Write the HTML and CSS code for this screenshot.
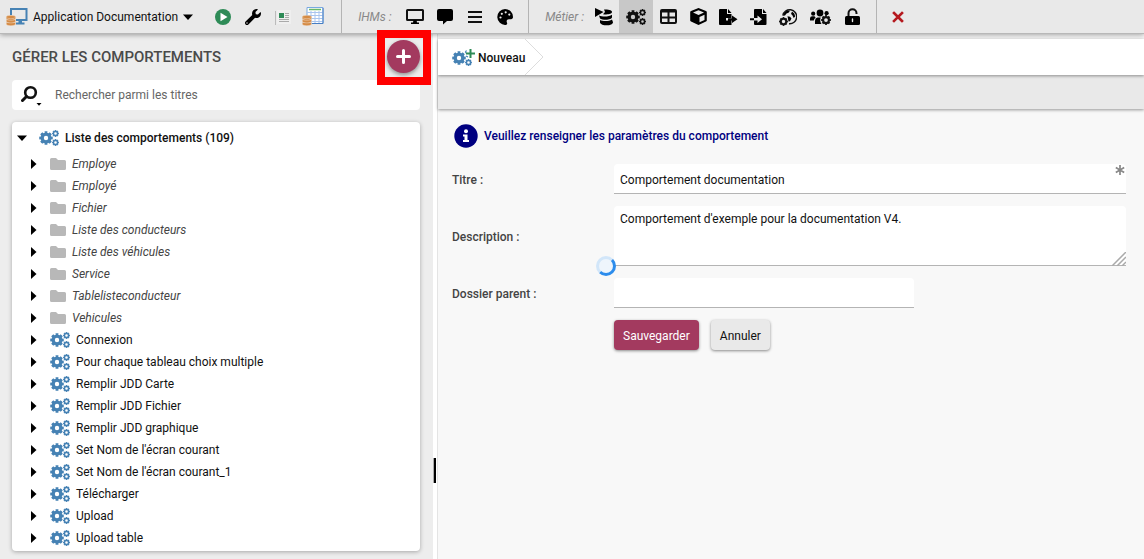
FILE: index.html
```
<!DOCTYPE html>
<html lang="fr">
<head>
<meta charset="utf-8">
<title>Gérer les comportements</title>
<link rel="stylesheet" href="styles.css">
</head>
<body>
<svg class="sprite" aria-hidden="true">
  <symbol id="gear-big" viewBox="0 0 14 14">
    <circle cx="7" cy="7" r="3.900" fill="none" stroke="currentColor" stroke-width="3.400"/>
    <circle cx="7" cy="7" r="5.700" fill="none" stroke="currentColor" stroke-width="2.200" pathLength="16" stroke-dasharray="1.200 .8" stroke-dashoffset=".6"/>
  </symbol>
  <symbol id="gear-small" viewBox="0 0 8 8">
    <circle cx="4" cy="4" r="2.400" fill="none" stroke="currentColor" stroke-width="1.800"/>
    <circle cx="4" cy="4" r="3.300" fill="none" stroke="currentColor" stroke-width="1.300" pathLength="16" stroke-dasharray="1.200 .8" stroke-dashoffset=".6"/>
  </symbol>
  <symbol id="gears" viewBox="0 0 20 16">
    <use href="#gear-big" x="0" y="1" width="14" height="14"/>
    <use href="#gear-small" x="13" y="0" width="7" height="7"/>
    <use href="#gear-small" x="13" y="9" width="7" height="7"/>
  </symbol>
  <symbol id="folder" viewBox="0 0 16 12">
    <path d="M1.500 0H6l2 2h6.500Q16 2 16 3.500V10.500Q16 12 14.500 12H1.500Q0 12 0 10.500V1.500Q0 0 1.500 0z" fill="#b8b8b8"/>
  </symbol>
  <symbol id="coins" viewBox="0 0 10 11">
    <g fill="#d58b45" stroke="#efd9c4" stroke-width=".5">
      <path d="M.3 7.500v1.500c0 2.300 9.200 2.300 9.200 0V7.500z"/>
      <path d="M.3 4.700v1.500c0 2.300 9.200 2.300 9.200 0V4.700z"/>
      <path d="M.3 2v1.500c0 2.300 9.200 2.300 9.200 0V2z"/>
      <ellipse cx="4.900" cy="2" rx="4.600" ry="1.700"/>
    </g>
  </symbol>
</svg>

<header class="toolbar">
  <div class="group group-app">
    <button class="app-menu" type="button">
      <svg width="22" height="20" viewBox="0 0 22 20"><path d="M5 8V2h15.500v11H10" fill="none" stroke="#4682b4" stroke-width="2"/><path d="M12.500 13h3.500v2.500h2.500V17.500H10v-2h2.500z" fill="#4682b4"/><use href="#coins" x="0" y="8" width="10" height="11"/></svg>
      <span>Application Documentation</span>
      <svg width="10" height="6" viewBox="0 0 10 6"><path d="M0 .5h10L5 6z"/></svg>
    </button>
    <div class="tools">
      <button class="tool" type="button" aria-label="Exécuter"><svg width="16" height="16" viewBox="0 0 16 16"><circle cx="8" cy="8" r="8" fill="#2e8b57"/><path d="M5.500 3.700v8.600L12.500 8z" fill="#fff"/></svg></button>
      <button class="tool" type="button" aria-label="Outils"><svg width="16" height="16" viewBox="0 0 512 512"><path d="M507.700 109.100c-2.200-9-13.500-12.100-20.100-5.500l-74.400 74.400-67.900-11.300L334 98.900l74.400-74.400c6.600-6.600 3.400-17.900-5.700-20.200-47.400-11.700-99.600.9-136.600 37.900-39.600 39.600-50.500 97.100-34.100 147.200L18.700 402.800c-25 25-25 65.500 0 90.500s65.500 25 90.500 0l213.200-213.200c50.100 16.700 107.500 5.700 147.400-34.200 37.100-37.100 49.700-89.300 37.900-136.800zM64 472c-13.200 0-24-10.800-24-24s10.700-24 24-24 24 10.700 24 24-10.700 24-24 24z"/></svg></button>
      <button class="tool" type="button" aria-label="Journal"><svg width="16" height="16" viewBox="0 0 16 16"><path d="M2 1h14v14H2z" fill="#efefef"/><path d="M.5 2v14" stroke="#bbb"/><path d="M4 4h5v5H4z" fill="#2e8b57"/><path d="M10 4.500h4M10 6.500h4M10 8.500h4M4 10.500h10M4 12.500h10" stroke="#aaa"/></svg></button>
      <button class="tool" type="button" aria-label="Données"><svg width="22" height="19" viewBox="0 0 22 19"><path d="M5 .5h16v16H5z" fill="#fff" stroke="#79a9e0"/><path d="M7 2.500h12" stroke="#68b868" stroke-width="1.500"/><path d="M5 5.500h16M5 8.500h16M5 11.500h16M5 14.500h16M9 4v12M13 4v12M17 4v12" stroke="#a9c5ee"/><path d="M21 1v15.500H10" fill="none" stroke="#477fc4"/><use href="#coins" x="0" y="8" width="10" height="11"/></svg></button>
    </div>
  </div>
  <div class="group group-ihm">
    <span class="group-label">IHMs :</span>
    <button class="tool" type="button" aria-label="Écrans"><svg width="20" height="17" viewBox="0 0 20 17"><rect x="2" y="2" width="16" height="10" rx=".5" fill="none" stroke="#111" stroke-width="2"/><path d="M8.500 12h3l.5 2.500h2V16H6v-1.500h2z"/></svg></button>
    <button class="tool" type="button" aria-label="Messages"><svg width="16" height="17" viewBox="0 0 16 17"><path d="M2 1h12q2 0 2 2v8q0 2-2 2H10l-4 3.500V13H2q-2 0-2-2V3q0-2 2-2z"/></svg></button>
    <button class="tool" type="button" aria-label="Menus"><svg width="14" height="14" viewBox="0 0 14 14"><path d="M0 2h14M0 7h14M0 12h14" stroke="#111" stroke-width="2"/></svg></button>
    <button class="tool" type="button" aria-label="Thèmes"><svg width="16" height="16" viewBox="0 0 16 16"><path d="M8 0a8 8 0 1 0 .6 16c1.600-.2 1.900-1.500 1.300-2.600-.8-1.600.3-3.200 2-3.200H14c1.200 0 2-.9 2-2.200A8 8 0 0 0 8 0z"/><g fill="#e9e9e9"><circle cx="3.500" cy="8.500" r="1.100"/><circle cx="4.800" cy="4.800" r="1.100"/><circle cx="8.700" cy="3.300" r="1.100"/><circle cx="12.300" cy="5.600" r="1.100"/></g></svg></button>
  </div>
  <div class="group group-business">
    <span class="group-label">Métier :</span>
    <button class="tool" type="button" aria-label="Actions de données"><svg width="18" height="18" viewBox="0 0 18 18"><path d="M0 0l8.500 4L0 9z"/><path d="M9 1.500c4 0 8 .4 8 2.500S12.500 6.800 8 6.200L10 4zM4 7.500c3 1.500 10 1.600 13-.7v2.500c0 3-9.500 3-12 1.200zM5 12c3 1.400 9 1.400 12-.6l1 2.800c0 4-12 4-13 .5z"/></svg></button>
    <button class="tool tool-active" type="button" aria-label="Comportements"><svg width="20" height="16"><use href="#gears"/></svg></button>
    <button class="tool" type="button" aria-label="Tableaux"><svg width="17" height="15" viewBox="0 0 17 15"><rect x="1" y="1" width="15" height="13" rx="1" fill="none" stroke="#111" stroke-width="2"/><path d="M1 2.500h15M1 8.500h15M8.500 3v11" stroke="#111" stroke-width="2"/></svg></button>
    <button class="tool" type="button" aria-label="Modules"><svg width="17" height="17" viewBox="0 0 17 17"><path d="M8.500 0l7.500 3q.8.300.8 1v8.500q0 .7-.8 1L8.500 17 1 13.500q-.8-.3-.8-1V4q0-.7.8-1z"/><path d="M8.500 2.200L3 4.500 8.500 7 14 4.500zM9.500 9l5-2.300v5.200L9.500 14.300z" fill="#e9e9e9"/></svg></button>
    <button class="tool" type="button" aria-label="Exporter"><svg width="19" height="16" viewBox="0 0 19 16"><path d="M1 0h7v5h4.500v4H7v2.500h5.500V16H1q-1 0-1-1V1q0-1 1-1zM9 0l3.500 4H9zM13 9.200V6.500L18.500 10.300 13 14v-2.500H9V9.200z"/></svg></button>
    <button class="tool" type="button" aria-label="Importer"><svg width="17" height="16" viewBox="0 0 17 16"><path d="M5 0h7v5h4.500v10q0 1-1 1H5q-1 0-1-1v-3.500h3.500V14L12 10.200 7.500 6.500V9H4V1q0-1 1-1zM13 0l3.500 4H13zM0 9.300h4v1.900H0z"/></svg></button>
    <button class="tool" type="button" aria-label="Services web"><svg width="18" height="18" viewBox="0 0 18 18"><path d="M3.800 7.500a7 7 0 1 1 6.200 8.200" fill="none" stroke="#111" stroke-width="1.400"/><path d="M5.500 4.500L8 2.500l3 .2-1.500 2L7.500 5.500 6 7.500l-2 .3zM13 3.500l2.300 2 .9 3-1.500 1.500-1.500-3-1.200-1zM8.500 8.200l2.500.6 1.500 1.700-1.500 2.700-1.500.3-.5-2.500z"/><use href="#gear-small" x="0" y="9" width="9" height="9"/></svg></button>
    <button class="tool tool-wide" type="button" aria-label="Utilisateurs"><svg width="21" height="16" viewBox="0 0 21 16"><circle cx="3.200" cy="4.700" r="2.100"/><circle cx="10" cy="4" r="3.400"/><circle cx="16.600" cy="4.200" r="2.100"/><path d="M0 11.500V9.500q0-2.200 2.200-2.200h2.300L5.600 8.500Q4 10 3.800 11.500zM5 15v-3.200Q5 9 7.500 8.600h3.200q-1.300 3.600.8 6.400z"/><use href="#gear-small" x="11" y="6" width="10" height="10"/></svg></button>
    <button class="tool" type="button" aria-label="Droits"><svg width="15" height="17" viewBox="0 0 15 17"><path d="M3.500 8V5.200a4 4 0 0 1 8 0V6" fill="none" stroke="#111" stroke-width="2"/><rect y="8" width="15" height="9" rx="1.500"/><path d="M7.500 11v2.500" stroke="#e9e9e9" stroke-width="1.400" stroke-linecap="round"/></svg></button>
  </div>
  <div class="group group-close">
    <button class="tool" type="button" aria-label="Fermer"><svg width="12" height="12" viewBox="0 0 12 12"><path d="M2 2l8 8M10 2l-8 8" stroke="#b5191f" stroke-width="2.600" stroke-linecap="square"/></svg></button>
  </div>
</header>

<main class="workspace">
  <aside class="sidebar">
    <div class="side-head">
      <h1 class="side-title">GÉRER LES COMPORTEMENTS</h1>
      <div class="add-wrap">
        <button class="add" type="button" aria-label="Ajouter"><svg width="15" height="15" viewBox="0 0 15 15"><path d="M7.500 1.500v12M1.500 7.500h12" stroke="#fff" stroke-width="3" stroke-linecap="round"/></svg></button>
        <span class="highlight"></span>
      </div>
    </div>
    <label class="search">
      <svg width="21" height="21" viewBox="0 0 21 21"><circle cx="9.500" cy="7.500" r="5.300" fill="none" stroke="#111" stroke-width="2.600"/><path d="M5.500 11.500L1.500 15.500" stroke="#111" stroke-width="3" stroke-linecap="round"/><path d="M15.500 18h5L18 20.800z"/></svg>
      <input class="search-input" type="text" placeholder="Rechercher parmi les titres" aria-label="Rechercher parmi les titres">
    </label>
    <nav class="tree">
      <button class="root" type="button"><svg class="caret" width="10" height="6" viewBox="0 0 10 6"><path d="M0 .5h10L5 6z"/></svg><svg class="blue" width="20" height="16"><use href="#gears"/></svg><span>Liste des comportements (109)</span></button>
      <ul class="items">
        <li><button class="item item-folder" type="button"><svg width="6" height="10" viewBox="0 0 6 10"><path d="M0 0v10L5.500 5z"/></svg><svg width="16" height="12"><use href="#folder"/></svg><span>Employe</span></button></li>
        <li><button class="item item-folder" type="button"><svg width="6" height="10" viewBox="0 0 6 10"><path d="M0 0v10L5.500 5z"/></svg><svg width="16" height="12"><use href="#folder"/></svg><span>Employé</span></button></li>
        <li><button class="item item-folder" type="button"><svg width="6" height="10" viewBox="0 0 6 10"><path d="M0 0v10L5.500 5z"/></svg><svg width="16" height="12"><use href="#folder"/></svg><span>Fichier</span></button></li>
        <li><button class="item item-folder" type="button"><svg width="6" height="10" viewBox="0 0 6 10"><path d="M0 0v10L5.500 5z"/></svg><svg width="16" height="12"><use href="#folder"/></svg><span>Liste des conducteurs</span></button></li>
        <li><button class="item item-folder" type="button"><svg width="6" height="10" viewBox="0 0 6 10"><path d="M0 0v10L5.500 5z"/></svg><svg width="16" height="12"><use href="#folder"/></svg><span>Liste des véhicules</span></button></li>
        <li><button class="item item-folder" type="button"><svg width="6" height="10" viewBox="0 0 6 10"><path d="M0 0v10L5.500 5z"/></svg><svg width="16" height="12"><use href="#folder"/></svg><span>Service</span></button></li>
        <li><button class="item item-folder" type="button"><svg width="6" height="10" viewBox="0 0 6 10"><path d="M0 0v10L5.500 5z"/></svg><svg width="16" height="12"><use href="#folder"/></svg><span>Tablelisteconducteur</span></button></li>
        <li><button class="item item-folder" type="button"><svg width="6" height="10" viewBox="0 0 6 10"><path d="M0 0v10L5.500 5z"/></svg><svg width="16" height="12"><use href="#folder"/></svg><span>Vehicules</span></button></li>
        <li><button class="item" type="button"><svg width="6" height="10" viewBox="0 0 6 10"><path d="M0 0v10L5.500 5z"/></svg><svg class="blue" width="20" height="16"><use href="#gears"/></svg><span>Connexion</span></button></li>
        <li><button class="item" type="button"><svg width="6" height="10" viewBox="0 0 6 10"><path d="M0 0v10L5.500 5z"/></svg><svg class="blue" width="20" height="16"><use href="#gears"/></svg><span>Pour chaque tableau choix multiple</span></button></li>
        <li><button class="item" type="button"><svg width="6" height="10" viewBox="0 0 6 10"><path d="M0 0v10L5.500 5z"/></svg><svg class="blue" width="20" height="16"><use href="#gears"/></svg><span>Remplir JDD Carte</span></button></li>
        <li><button class="item" type="button"><svg width="6" height="10" viewBox="0 0 6 10"><path d="M0 0v10L5.500 5z"/></svg><svg class="blue" width="20" height="16"><use href="#gears"/></svg><span>Remplir JDD Fichier</span></button></li>
        <li><button class="item" type="button"><svg width="6" height="10" viewBox="0 0 6 10"><path d="M0 0v10L5.500 5z"/></svg><svg class="blue" width="20" height="16"><use href="#gears"/></svg><span>Remplir JDD graphique</span></button></li>
        <li><button class="item" type="button"><svg width="6" height="10" viewBox="0 0 6 10"><path d="M0 0v10L5.500 5z"/></svg><svg class="blue" width="20" height="16"><use href="#gears"/></svg><span>Set Nom de l'écran courant</span></button></li>
        <li><button class="item" type="button"><svg width="6" height="10" viewBox="0 0 6 10"><path d="M0 0v10L5.500 5z"/></svg><svg class="blue" width="20" height="16"><use href="#gears"/></svg><span>Set Nom de l'écran courant_1</span></button></li>
        <li><button class="item" type="button"><svg width="6" height="10" viewBox="0 0 6 10"><path d="M0 0v10L5.500 5z"/></svg><svg class="blue" width="20" height="16"><use href="#gears"/></svg><span>Télécharger</span></button></li>
        <li><button class="item" type="button"><svg width="6" height="10" viewBox="0 0 6 10"><path d="M0 0v10L5.500 5z"/></svg><svg class="blue" width="20" height="16"><use href="#gears"/></svg><span>Upload</span></button></li>
        <li><button class="item" type="button"><svg width="6" height="10" viewBox="0 0 6 10"><path d="M0 0v10L5.500 5z"/></svg><svg class="blue" width="20" height="16"><use href="#gears"/></svg><span>Upload table</span></button></li>
      </ul>
    </nav>
  </aside>
  <div class="splitter"><span class="grip"></span></div>
  <section class="panel">
    <div class="crumbs">
      <button class="crumb" type="button">
        <svg class="blue" width="24" height="18" viewBox="0 0 24 18"><use href="#gear-big" x="0" y="2" width="14" height="14"/><use href="#gear-small" x="13" y="10" width="7" height="7"/><path d="M14.500 1.500l-1 1.500 1 1.500M14 7l2 1" fill="none" stroke="currentColor" stroke-width="1.200"/><path d="M18.500 0v9M14 4.500h9" stroke="#2e8b57" stroke-width="2"/></svg>
        <span>Nouveau</span>
      </button>
      <svg class="chevron" width="19" height="36" viewBox="0 0 19 36"><path d="M0 0l18 18L0 36" fill="none" stroke="#ddd"/></svg>
    </div>
    <div class="actions"></div>
    <form class="form">
      <div class="notice">
        <svg width="24" height="24" viewBox="0 0 24 24"><circle cx="12" cy="12" r="11.700" fill="#000080"/><circle cx="12" cy="7.200" r="2" fill="#fff"/><path d="M9 10.500h4.500v5.500H15v2H9v-2h1.500v-3.500H9z" fill="#fff"/></svg>
        <span>Veuillez renseigner les paramètres du comportement</span>
      </div>
      <div class="fields">
        <label class="field-label" for="titre">Titre :</label>
        <div class="field">
          <input class="control" id="titre" type="text" value="Comportement documentation" required>
          <svg class="required" width="10" height="10" viewBox="0 0 10 10"><path d="M5 0v10M.8 2.500l8.400 5M9.200 2.500l-8.400 5" stroke="#888" stroke-width="1.700"/></svg>
        </div>
        <label class="field-label" for="description">Description :</label>
        <div class="field">
          <textarea class="control control-area" id="description">Comportement d'exemple pour la documentation V4.</textarea>
          <svg class="resizer" width="14" height="14" viewBox="0 0 14 14"><path d="M0 14L14 0M5 14l9-9M10 14l4-4" stroke="#aaa" stroke-width="1.500"/></svg>
          <span class="spinner" role="status"></span>
        </div>
        <label class="field-label" for="dossier">Dossier parent :</label>
        <div class="field"><input class="control control-short" id="dossier" type="text"></div>
        <div class="buttons">
          <button class="btn btn-primary" type="button">Sauvegarder</button>
          <button class="btn" type="button">Annuler</button>
        </div>
      </div>
    </form>
  </section>
</main>
</body>
</html>
```
FILE: styles.css
```
* {
  box-sizing: border-box;
}

body {
  margin: 0;
  min-height: 100vh;
  display: flex;
  flex-direction: column;
  background: #ededed;
  color: #111;
  font: 12px/16px Roboto, sans-serif;
}

button,
input,
textarea {
  margin: 0;
  border: 0;
  padding: 0;
  background: none;
  color: inherit;
  font: inherit;
}

svg {
  display: block;
  flex: none;
}

.sprite {
  position: absolute;
  width: 0;
  height: 0;
}

.blue {
  color: #4682b4;
}

.toolbar {
  position: relative;
  z-index: 1;
  display: flex;
  height: 34px;
  background: #e9e9e9;
  border-bottom: 1px solid #b8b8b8;
  box-shadow: 0 1px 5px rgba(0, 0, 0, .35);
}

.group {
  display: flex;
  align-items: stretch;
  border-right: 1px solid #b4b4b4;
}

.group-app {
  padding: 0 13px 0 6px;
  gap: 15px;
}

.group-app .app-menu {
  gap: 5px;
}

.group-ihm {
  padding: 0 8px 0 16px;
}

.group-business {
  padding: 0 9px 0 16px;
}

.group-close {
  padding-left: 6px;
  border: 0;
}

.app-menu {
  display: flex;
  align-items: center;
}

.tools {
  display: flex;
}

.tool {
  display: flex;
  align-items: center;
  justify-content: center;
  width: 30px;
}

.tool-active {
  width: 34px;
  background: #c8c8c8;
}

.tool-wide {
  width: 34px;
}

.group-label {
  align-self: center;
  width: 42px;
  color: #888;
  font-style: italic;
}

.group-business .group-label {
  width: 44px;
}

.workspace {
  flex: 1;
  display: grid;
  grid-template-columns: 433px 4px 1fr;
}

.sidebar {
  padding: 5px 13px 8px 12px;
}

.side-head {
  display: flex;
  align-items: center;
  justify-content: space-between;
  height: 36px;
}

.side-title {
  margin: 0;
  color: #4a4a4a;
  font-size: 15px;
  font-weight: 500;
}

.add-wrap {
  position: relative;
  margin-bottom: 2px;
}

.add {
  display: flex;
  align-items: center;
  justify-content: center;
  width: 33px;
  height: 33px;
  border-radius: 50%;
  background: #a33a5f;
  box-shadow: 0 2px 4px rgba(0, 0, 0, .4);
}

.highlight {
  position: absolute;
  z-index: 2;
  inset: -10px -11px -12px -10px;
  border: 8px solid #f00;
  pointer-events: none;
}

.search {
  display: flex;
  align-items: center;
  gap: 13px;
  height: 30px;
  margin: 5px 0 12px;
  padding: 0 9px;
  border-radius: 4px;
  background: #fff;
}

.search-input {
  flex: 1;
  outline: 0;
}

.search-input::placeholder {
  color: #666;
  opacity: 1;
}

.tree {
  padding-bottom: 2px;
  border-radius: 4px;
  background: #fff;
  box-shadow: 0 1px 4px rgba(0, 0, 0, .3);
}

.root {
  display: flex;
  align-items: center;
  width: 100%;
  height: 31px;
  padding-left: 5px;
  gap: 6px;
  font-weight: 500;
}

.root .caret {
  margin-right: 6px;
}

.items {
  margin: 0;
  padding: 0;
  list-style: none;
}

.item {
  display: flex;
  align-items: center;
  width: 100%;
  height: 22px;
  padding-left: 19px;
  gap: 6px;
}

.item svg:first-child {
  margin-right: 7px;
}

.item-folder {
  color: #444;
  font-style: italic;
}

.splitter {
  display: flex;
  padding-top: 424px;
  background: #fff;
}

.grip {
  width: 3px;
  height: 25px;
  border-left: 1px solid #aaa;
  background: #000;
}

.panel {
  display: flex;
  flex-direction: column;
  padding-top: 5px;
  border-left: 1px solid #e4e4e4;
  background: #f8f8f8;
}

.crumbs {
  position: relative;
  z-index: 1;
  display: flex;
  height: 36px;
  background: #fff;
  box-shadow: 0 1px 3px rgba(0, 0, 0, .4);
}

.crumb {
  display: flex;
  align-items: center;
  gap: 2px;
  padding: 2px 0 0 14px;
  font-weight: 500;
}

.actions {
  height: 34px;
  background: #e9e9e9;
  box-shadow: 0 1px 3px rgba(0, 0, 0, .4);
}

.form {
  padding: 15px 18px 12px 14px;
}

.notice {
  display: flex;
  gap: 6px;
  height: 40px;
  padding-left: 2px;
  color: #000080;
  font-weight: 500;
  line-height: 24px;
}

.fields {
  display: grid;
  grid-template-columns: 150px 1fr;
  gap: 12px;
  align-items: center;
}

.field-label {
  padding-top: 2px;
  color: #444;
  font-weight: 500;
}

.field {
  position: relative;
}

.control {
  display: block;
  width: 100%;
  height: 30px;
  padding: 2px 6px 0;
  border-bottom: 1px solid #b4b4b4;
  border-radius: 4px 4px 0 0;
  background: #fff;
  outline: 0;
}

.control-area {
  height: 60px;
  padding-top: 5px;
  resize: none;
}

.control-short {
  width: 300px;
}

.required {
  position: absolute;
  top: 1px;
  right: 1px;
}

.resizer {
  position: absolute;
  right: 0;
  bottom: 0;
}

.spinner {
  position: absolute;
  left: -18px;
  bottom: -10px;
  width: 20px;
  height: 20px;
  border: 3px solid #d2e6f9;
  border-right-color: #2c8cec;
  border-bottom-color: #2c8cec;
  border-radius: 50%;
  background: #eef5fc;
}

.buttons {
  grid-column: 2;
  display: flex;
  gap: 12px;
}

.btn {
  height: 30px;
  padding: 2px 9px 0;
  border-radius: 4px;
  background: #e9e9e9;
  box-shadow: 0 1px 3px rgba(0, 0, 0, .45);
}

.btn-primary {
  background: #a33a5f;
  color: #fff;
}
```
